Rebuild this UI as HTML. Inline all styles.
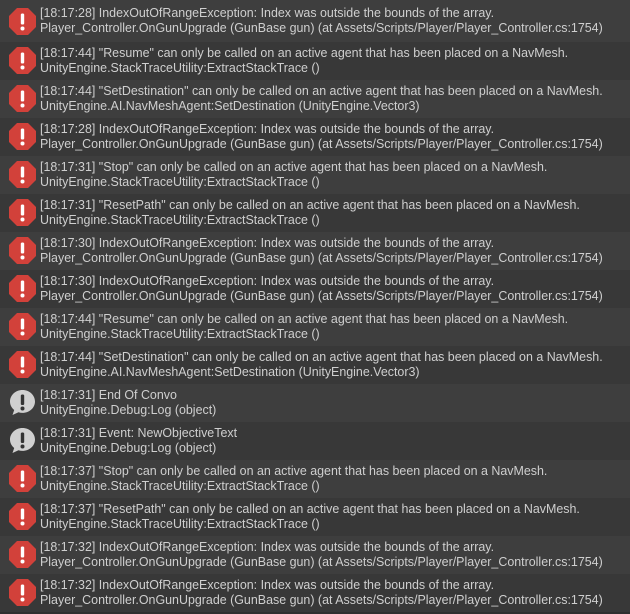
<!DOCTYPE html><html><head><style>
body{margin:0;background:#2f2f2f;width:630px;height:614px;overflow:hidden;font-family:"Liberation Sans",sans-serif;font-size:12.45px;color:#cfcfcf}
.r{height:38px;position:relative;white-space:nowrap}
.r:nth-child(odd){background:#3e3e3e}.r:nth-child(even){background:#383838}
.r:first-child{height:42px}
.r:first-child .i{top:8px}.r:first-child .t{top:6px}
.i{position:absolute;left:9px;top:5px;width:27px;height:27px}
.t{position:absolute;left:40px;top:4px;line-height:15px}
</style></head><body>
<div id="c"></div>
<script>
const E='<svg class="i" viewBox="0 0 27 27"><polygon points="8,0 19,0 27,8 27,19 19,27 8,27 0,19 0,8" fill="#d2413a"/><rect x="11.8" y="5.5" width="3.4" height="11" rx="1.4" fill="#fff"/><circle cx="13.5" cy="20.5" r="2" fill="#fff"/></svg>';
const L='<svg class="i" viewBox="0 0 27 27"><path d="M13.5 1C6.5 1 1 6.3 1 12.5c0 3.4 1.6 6.400 4.200 8.500L3.500 26 9.500 23.300c1.300.4 2.600.6 4 .6 7 0 12.500-5.200 12.500-11.400S20.500 1 13.500 1z" fill="#d0d0d0"/><rect x="11.8" y="5.5" width="3.4" height="10.5" rx="1.4" fill="#333"/><circle cx="13.5" cy="19.5" r="2" fill="#333"/></svg>';
const I=['','Player_Controller.OnGunUpgrade (GunBase gun) (at Assets/Scripts/Player/Player_Controller.cs:1754)'];
const S=(t,n)=>[`[${t}] "${n}" can only be called on an active agent that has been placed on a NavMesh.`,'UnityEngine.StackTraceUtility:ExtractStackTrace ()'];
const D=t=>[`[${t}] "SetDestination" can only be called on an active agent that has been placed on a NavMesh.`,'UnityEngine.AI.NavMeshAgent:SetDestination (UnityEngine.Vector3)'];
const X=t=>[`[${t}] IndexOutOfRangeException: Index was outside the bounds of the array.`,I[1]];
const rows=[[E,X('18:17:28')],[E,S('18:17:44','Resume')],[E,D('18:17:44')],[E,X('18:17:28')],[E,S('18:17:31','Stop')],[E,S('18:17:31','ResetPath')],[E,X('18:17:30')],[E,X('18:17:30')],[E,S('18:17:44','Resume')],[E,D('18:17:44')],[L,['[18:17:31] End Of Convo','UnityEngine.Debug:Log (object)']],[L,['[18:17:31] Event: NewObjectiveText','UnityEngine.Debug:Log (object)']],[E,S('18:17:37','Stop')],[E,S('18:17:37','ResetPath')],[E,X('18:17:32')],[E,X('18:17:32')]];
document.getElementById('c').innerHTML=rows.map(r=>`<div class="r">${r[0]}<div class="t">${r[1][0]}<br>${r[1][1]}</div></div>`).join('');
</script>
</body></html>
